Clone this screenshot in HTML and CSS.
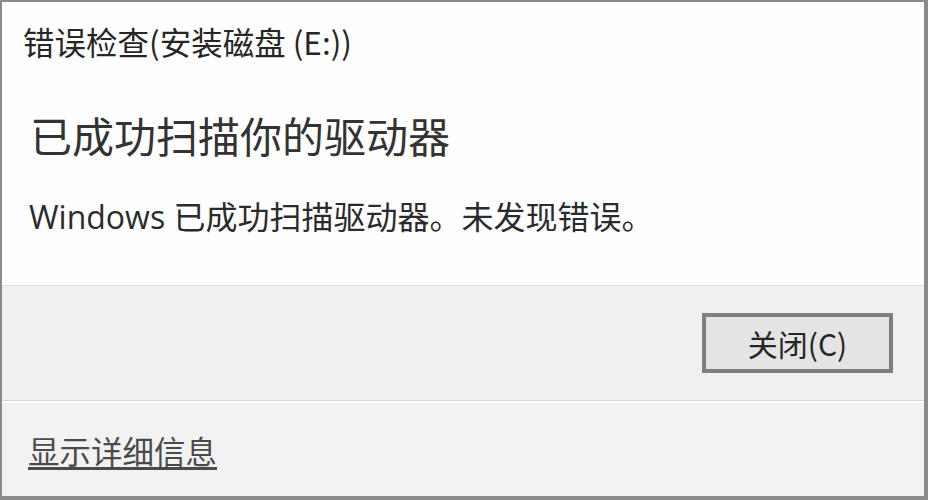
FILE: index.html
```html
<!DOCTYPE html>
<html lang="zh-CN">
<head>
<meta charset="utf-8">
<title>错误检查</title>
<link rel="stylesheet" href="styles.css">
</head>
<body>
<div class="dialog">
  <div class="content">
    <div class="title">错误检查(安装磁盘 (E:))</div>
    <div class="heading">已成功扫描你的驱动器</div>
    <div class="message">Windows 已成功扫描驱动器。未发现错误。</div>
  </div>
  <div class="buttons">
    <button class="btn">关闭(C)</button>
  </div>
  <div class="footer">
    <a class="link" href="#">显示详细信息</a>
  </div>
</div>
</body>
</html>
```
FILE: styles.css
```css
html, body {
  margin: 0;
  padding: 0;
  background: #ffffff;
}
body {
  font-family: "Open Sans", "Noto Sans CJK SC", sans-serif;
  color: #2b2b2b;
}
.dialog {
  box-sizing: border-box;
  width: 928px;
  height: 500px;
  border-top: 2px solid #8a8a8a;
  border-left: 2px solid #8a8a8a;
  border-right: 4px solid #8a8a8a;
  border-bottom: 4px solid #8a8a8a;
  display: flex;
  flex-direction: column;
  background: #f0f0f0;
}
.content {
  background: #fefefe;
  padding: 19px 0 0 21px;
  border-bottom: 1px solid #dedede;
  height: 284px;
  box-sizing: border-box;
}
.title {
  font-family: "Noto Sans CJK SC", sans-serif;
  font-size: 31.5px;
  line-height: 40px;
  height: 40px;
  color: #262626;
}
.heading {
  font-family: "Noto Sans CJK SC", sans-serif;
  font-size: 42px;
  line-height: 50px;
  margin-top: 49px;
  margin-left: 7px;
  color: #333333;
}
.message {
  font-size: 32px;
  line-height: 40px;
  margin-top: 37px;
  margin-left: 6px;
  color: #2b2b2b;
}
.buttons {
  background: #f0f0f0;
  height: 115px;
  box-sizing: border-box;
  padding: 27px 31px 0 0;
  display: flex;
  justify-content: flex-end;
  align-items: flex-start;
  border-bottom: 1px solid #d6d6d6;
}
.btn {
  width: 191px;
  height: 60px;
  box-sizing: border-box;
  border: 4px solid #7f7f7f;
  background: #e4e4e4;
  font-family: "Noto Sans CJK SC", sans-serif;
  font-size: 30px;
  color: #262626;
  padding: 0;
  margin: 0;
}
.footer {
  flex: 1;
  background: #f2f2f2;
  border-top: 2px solid #ffffff;
  padding: 27px 0 0 26px;
  box-sizing: border-box;
}
.link {
  font-family: "Noto Sans CJK SC", sans-serif;
  font-size: 31.5px;
  line-height: 40px;
  color: #4a4a4a;
  text-decoration: underline;
  text-decoration-thickness: 3px;
  text-underline-offset: 3px;
}
```
